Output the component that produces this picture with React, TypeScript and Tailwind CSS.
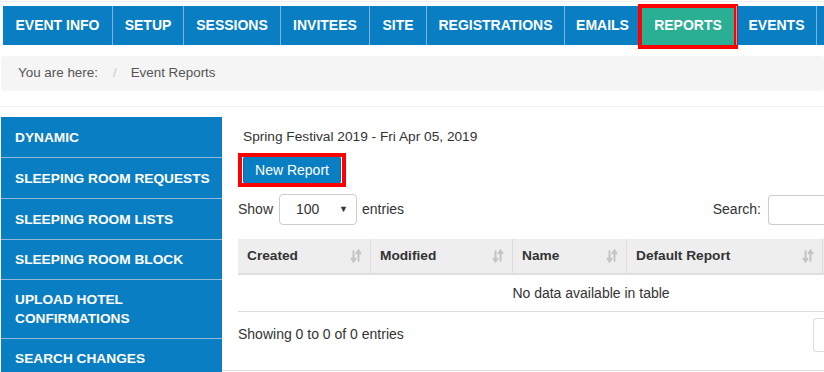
import React from 'react';

const navItems = [
  { label: 'EVENT INFO', w: 'w-[109px]' },
  { label: 'SETUP', w: 'w-[71px]' },
  { label: 'SESSIONS', w: 'w-[97px]' },
  { label: 'INVITEES', w: 'w-[89px]' },
  { label: 'SITE', w: 'w-[57px]' },
  { label: 'REGISTRATIONS', w: 'w-[138px]' },
  { label: 'EMAILS', w: 'w-[76px]' },
  { label: 'REPORTS', w: 'w-[96px]', active: true },
  { label: 'EVENTS', w: 'w-[80px]' },
  { label: '', w: 'w-[60px]' },
];

const sideItems = [
  { label: 'DYNAMIC', h: 'h-[40px]' },
  { label: 'SLEEPING ROOM REQUESTS', h: 'h-[41px]' },
  { label: 'SLEEPING ROOM LISTS', h: 'h-[41px]' },
  { label: 'SLEEPING ROOM BLOCK', h: 'h-[40px]' },
  { label: 'UPLOAD HOTEL CONFIRMATIONS', h: 'h-[59px]' },
  { label: 'SEARCH CHANGES', h: 'h-[40px]' },
];

const columns = [
  { label: 'Created', w: 'w-[132px]' },
  { label: 'Modified', w: 'w-[142px]' },
  { label: 'Name', w: 'w-[114px]' },
  { label: 'Default Report', w: 'w-[196px]' },
  { label: '', w: 'w-[122px]' },
];

function SortIcon() {
  return (
    <svg width="12" height="14" viewBox="0 0 12 14" className="shrink-0">
      <path d="M3.5 1.5v10M1 9l2.5 3.5L6 9" stroke="#c4c4c4" strokeWidth="2" fill="none" />
      <path d="M8.5 12.5v-10M6 5l2.5-3.5L11 5" stroke="#c4c4c4" strokeWidth="2" fill="none" />
    </svg>
  );
}

export default function App() {
  return (
    <div className="relative w-[824px] h-[372px] overflow-hidden bg-white font-['Liberation_Sans',Arial,sans-serif] text-[#333]">
      <div className="h-[1px] mt-[1px] bg-[#eeeeee]" />

      {/* top nav */}
      <div className="flex mt-[4px] ml-[3px] h-[39px] bg-[#0a7ec2]">
        {navItems.map((item, i) => (
          <div
            key={i}
            className={`relative ${item.w} shrink-0 flex items-center justify-center text-[14px] font-bold text-white ${
              i > 0 ? 'border-l border-[#7fb3d8]' : ''
            } ${item.active ? 'bg-[#2aae94] border-l-0' : ''}`}
          >
            {item.label}
            {item.active && (
              <span className="absolute -left-[2px] -right-[2px] -top-[2px] -bottom-[4px] border-[4px] border-[#ff0000]" />
            )}
          </div>
        ))}
      </div>

      {/* breadcrumb */}
      <div className="mt-[11px] ml-[1px] h-[35px] rounded-[4px] bg-[#f5f5f5] flex items-center pl-[17px] text-[13.4px] text-[#555]">
        <span>You are here:</span>
        <span className="ml-[15px] mr-[14px] text-[#cccccc]">/</span>
        <span>Event Reports</span>
      </div>

      <div className="mt-[15px] h-[1px] bg-[#eeeeee]" />

      <div className="flex mt-[10px]">
        {/* sidebar */}
        <div className="ml-[1px] w-[221px] shrink-0 bg-[#0a7ec2]">
          {sideItems.map((s, i) => (
            <div
              key={i}
              className={`${s.h} flex items-center pl-[14px] pr-2 text-[13.7px] font-bold leading-[19px] text-white ${
                i > 0 ? 'border-t border-[#8fb8d6]' : ''
              }`}
            >
              {s.label === 'UPLOAD HOTEL CONFIRMATIONS' ? (
                <span>
                  UPLOAD HOTEL
                  <br />
                  CONFIRMATIONS
                </span>
              ) : (
                s.label
              )}
            </div>
          ))}
        </div>

        {/* content */}
        <div className="ml-[16px] flex-1 min-w-0">
          <div className="pt-[11px] pl-[5px] text-[13.7px] leading-[18px]">Spring Festival 2019 - Fri Apr 05, 2019</div>

          <div className="mt-[10px] ml-[5px] relative w-[98px] h-[28px] rounded-[3px] bg-[#0a7ec2] border border-[#086aa5] flex items-center justify-center text-[14px] text-white">
            New Report
            <span className="absolute -left-[6px] -right-[6px] -top-[4px] -bottom-[4px] border-[4px] border-[#ff0000]" />
          </div>

          <div className="mt-[10px] flex items-center h-[31px] text-[14px]">
            <span>Show</span>
            <div className="ml-[6px] w-[78px] h-[31px] rounded-[4px] border border-[#cccccc] flex items-center pl-[16px] pr-[8px] text-[14px]">
              <span className="flex-1">100</span>
              <span className="text-[9px] text-[#333]">▼</span>
            </div>
            <span className="ml-[5px]">entries</span>
            <div className="ml-auto flex items-center">
              <span>Search:</span>
              <div className="ml-[7px] w-[56px] h-[30px] rounded-l-[4px] border border-r-0 border-[#cccccc]" />
            </div>
          </div>

          {/* table */}
          <div className="mt-[14px] w-[706px]">
            <div className="flex h-[36px] bg-[#eeeeee] border-b-2 border-[#dddddd]">
              {columns.map((c, i) => (
                <div
                  key={i}
                  className={`${c.w} shrink-0 flex items-center pl-[9px] pr-[8px] text-[13.7px] font-bold ${
                    i > 0 ? 'border-l border-[#dddddd]' : ''
                  }`}
                >
                  <span className="flex-1">{c.label}</span>
                  {c.label && <SortIcon />}
                </div>
              ))}
            </div>
            <div className="h-[37px] flex items-center justify-center border-b border-[#dddddd] text-[14px]">
              No data available in table
            </div>
          </div>

          <div className="flex items-start">
            <div className="pt-[12px] text-[14px]">Showing 0 to 0 of 0 entries</div>
            <div className="ml-auto mt-[6px] w-[11px] h-[34px] rounded-l-[4px] border border-r-0 border-[#dddddd]" />
          </div>
        </div>
      </div>

      <div className="absolute left-[222px] right-0 bottom-[1px] h-[1px] bg-[#dddddd]" />
    </div>
  );
}
